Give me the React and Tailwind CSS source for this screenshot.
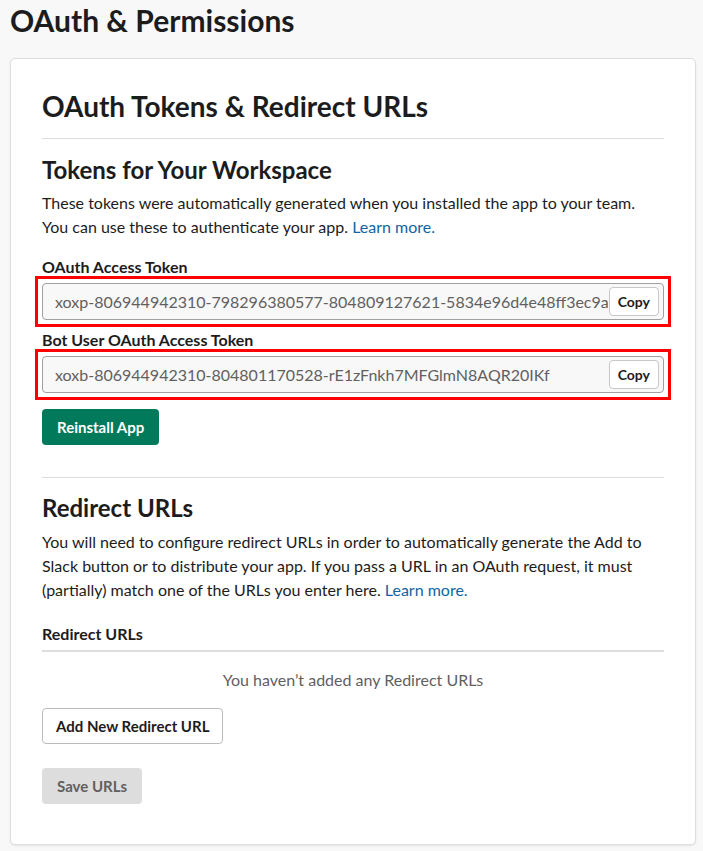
import React from "react";

const font = { fontFamily: "Lato, 'Noto Sans', sans-serif" };

function TokenField({ label, value, first }) {
    return (
        <div className={first ? "mt-[18px]" : "mt-[10px]"}>
            <div className="text-[16px] leading-5 font-bold text-[#1d1c1d]">{label}</div>
            {/* red highlight box around the field */}
            <div className="mt-[6px] outline-[3px] outline-solid outline-[#f00] outline-offset-[4px]">
                <div className="flex items-center h-[37px] rounded-[4px] border border-[#a0a0a0] bg-[#f8f8f8]">
                    <div className="flex-1 min-w-0 overflow-hidden whitespace-nowrap pl-3 text-[16px] text-[#616061]">
                        {value}
                    </div>
                    <button className="shrink-0 mr-[4px] ml-[1px] h-[29px] px-[8px] rounded-[4px] border border-[#c8c8c8] bg-white text-[14px] font-bold text-[#1d1c1d]">
                        Copy
                    </button>
                </div>
            </div>
        </div>
    );
}

export default function App() {
    return (
        <div className="min-h-[851px] bg-[#f8f8f8] px-[10px] pb-[8px]" style={font}>
            <h1 className="text-[30px] leading-[40px] font-bold text-[#1d1c1d]">
                OAuth &amp; Permissions
            </h1>

            <div className="mt-[18px] w-[686px] rounded-[5px] border border-[#dddddd] bg-white px-[31px] pt-[29px] pb-[40px] shadow-[0_1px_2px_rgba(0,0,0,0.08)]">
                {/* Tokens */}
                <h2 className="text-[28px] leading-[36px] font-bold text-[#1d1c1d] pb-[14px] border-b border-[#dddddd]">
                    OAuth Tokens &amp; Redirect URLs
                </h2>

                <h3 className="mt-[17px] text-[24px] leading-[28px] font-bold text-[#1d1c1d]">
                    Tokens for Your Workspace
                </h3>
                <p className="mt-[7px] text-[16px] leading-6 text-[#1d1c1d]">
                    These tokens were automatically generated when you installed the app to your team. You can use these to authenticate your app.{" "}
                    <a className="text-[#1264a3]">Learn more.</a>
                </p>

                <TokenField
                    first
                    label="OAuth Access Token"
                    value="xoxp-806944942310-798296380577-804809127621-5834e96d4e48ff3ec9a1b7c2d4f6a8b9c"
                />
                <TokenField
                    label="Bot User OAuth Access Token"
                    value="xoxb-806944942310-804801170528-rE1zFnkh7MFGlmN8AQR20IKf"
                />

                <button className="mt-4 h-[36px] px-[15px] rounded-[4px] bg-[#007a5a] text-white text-[15px] font-bold">
                    Reinstall App
                </button>

                {/* Redirect URLs */}
                <div className="mt-8 border-t border-[#dddddd]" />
                <h3 className="mt-4 text-[24px] leading-[28px] font-bold text-[#1d1c1d]">Redirect URLs</h3>
                <p className="mt-2 text-[16px] leading-6 text-[#1d1c1d]">
                    You will need to configure redirect URLs in order to automatically generate the Add to Slack button or to distribute your app. If you pass a URL in an OAuth request, it must (partially) match one of the URLs you enter here.{" "}
                    <a className="text-[#1264a3]">Learn more.</a>
                </p>

                <div className="mt-[22px] pb-[6px] border-b-2 border-[#dddddd] text-[16px] leading-5 font-bold text-[#1d1c1d]">
                    Redirect URLs
                </div>
                <div className="mt-4 text-center text-[16px] leading-6 text-[#616061]">
                    You haven’t added any Redirect URLs
                </div>

                <div className="mt-4">
                    <button className="h-[36px] px-[13px] rounded-[4px] border border-[#bbbbbb] bg-white text-[15px] font-bold text-[#1d1c1d]">
                        Add New Redirect URL
                    </button>
                </div>
                <div className="mt-[24px]">
                    <button className="h-[36px] px-[15px] rounded-[4px] bg-[#dddddd] text-[15px] font-bold text-[#616061]">
                        Save URLs
                    </button>
                </div>
            </div>
        </div>
    );
}
